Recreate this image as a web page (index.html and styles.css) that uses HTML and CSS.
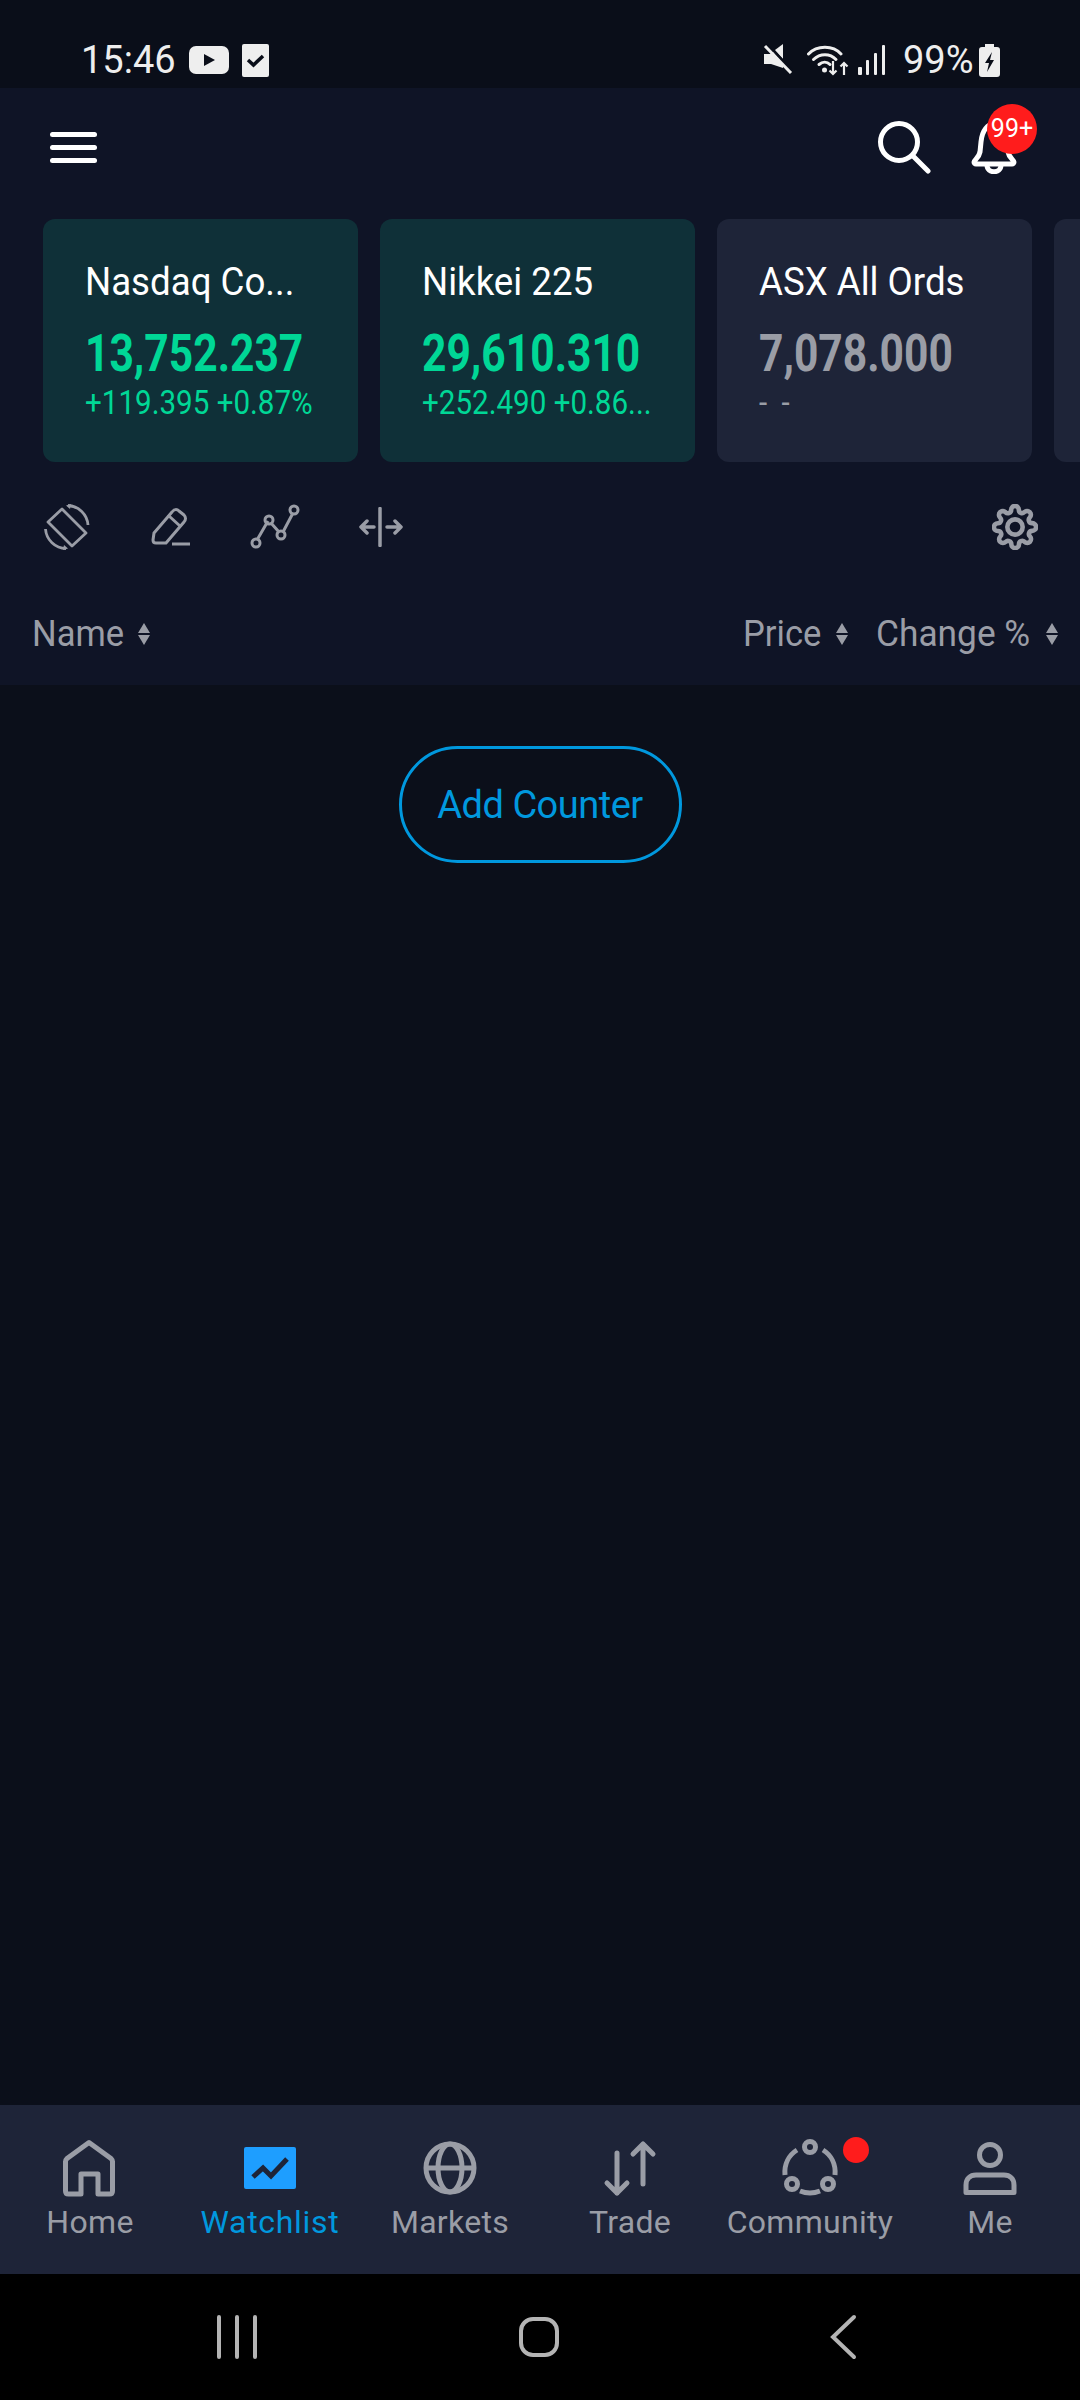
FILE: index.html
```html
<!DOCTYPE html>
<html lang="en">
<head>
  <meta charset="UTF-8">
  <meta name="viewport" content="width=device-width, initial-scale=1.0">
  <title>Watchlist</title>
  <link rel="stylesheet" href="styles.css">
</head>
<body>
  <div class="status-bar">
    <div class="status-left">
      <span class="time">15:46</span>
      <svg class="st-youtube" width="40" height="28" viewBox="0 0 40 28"><rect width="40" height="28" rx="7" fill="#eee"/><path d="M15 8l11 6-11 6z" fill="#0a0e19"/></svg>
      <svg class="st-check" width="27" height="33" viewBox="0 0 27 33"><rect width="27" height="33" rx="2" fill="#eee"/><path d="M6 16l5.500 5L21 12" fill="none" stroke="#0a0e19" stroke-width="3.500"/></svg>
    </div>
    <div class="status-right">
      <svg width="30" height="30" viewBox="0 0 30 30"><path d="M1 10h6l3-2 10 12v4L8 20H1z" fill="#eee"/><path d="M12 6l8-6v15z" fill="#eee"/><path d="M2 2l26 27" stroke="#eee" stroke-width="3"/><path d="M2 2l26 27" stroke="#0a0e19" stroke-width="1" transform="translate(3 -2)"/></svg>
      <svg class="st-wifi" width="43" height="32" viewBox="0 0 43 32"><g fill="none" stroke="#eee" stroke-width="3" stroke-linecap="round"><path d="M1.500 10C10 1 26 1 34 10"/><path d="M6.500 15.500C13 9 23 9 29 15.500"/><path d="M12 20.500c3.500-3 8-3 11 0"/></g><circle cx="17.500" cy="26" r="2.500" fill="#eee"/><g fill="none" stroke="#eee" stroke-width="2.200"><path d="M26 17v13M22.500 26.500l3.500 3.500 3.500-3.500"/><path d="M37 31V19M33.500 22.500l3.500-3.500 3.500 3.500"/></g></svg>
      <svg class="st-signal" width="28" height="30" viewBox="0 0 28 30"><g fill="#eee"><rect x="0" y="22" width="4" height="8" rx="1"/><rect x="8" y="15" width="3" height="15" rx="1"/><rect x="16" y="8" width="3" height="22" rx="1"/><rect x="24" y="0" width="3" height="30" rx="1"/></g></svg>
      <span class="battery-pct">99%</span>
      <svg class="st-battery" width="21" height="33" viewBox="0 0 21 33"><path d="M6 0h9v3h3a3 3 0 0 1 3 3v24a3 3 0 0 1-3 3H3a3 3 0 0 1-3-3V6a3 3 0 0 1 3-3h3z" fill="#eee"/><path d="M13 8l-7 11h4l-2 9 7-12h-4z" fill="#0a0e19"/></svg>
    </div>
  </div>

  <div class="header">
    <div class="top-bar">
      <div class="hamburger"><span></span><span></span><span></span></div>
      <div class="top-actions">
        <svg width="54" height="54" viewBox="0 0 54 54"><circle cx="22" cy="22" r="18.500" fill="none" stroke="#fff" stroke-width="5"/><path d="M36 36l15 15" stroke="#fff" stroke-width="5" stroke-linecap="round"/></svg>
        <div class="bell">
          <svg width="48" height="54" viewBox="0 0 48 54"><path d="M4 42c0-2 5-4 6-10l1-10C12 10 18 4 24 4s12 6 13 18l1 10c1 6 6 8 6 10 0 1-1 2-2 2H6c-1 0-2-1-2-2z" fill="none" stroke="#fff" stroke-width="5" stroke-linejoin="round"/><path d="M17 45c0 9 14 9 14 0" fill="none" stroke="#fff" stroke-width="5"/></svg>
          <span class="badge">99+</span>
        </div>
      </div>
    </div>

    <div class="cards">
      <div class="card up">
        <div class="card-name"><span class="narrow">Nasdaq Co...</span></div>
        <div class="card-price"><span class="narrow">13,752.237</span></div>
        <div class="card-change"><span class="narrow">+119.395 +0.87%</span></div>
      </div>
      <div class="card up">
        <div class="card-name"><span class="narrow">Nikkei 225</span></div>
        <div class="card-price"><span class="narrow">29,610.310</span></div>
        <div class="card-change"><span class="narrow">+252.490 +0.86...</span></div>
      </div>
      <div class="card flat">
        <div class="card-name"><span class="narrow">ASX All Ords</span></div>
        <div class="card-price"><span class="narrow">7,078.000</span></div>
        <div class="card-change dashes"><span class="narrow">- -</span></div>
      </div>
      <div class="card flat"></div>
    </div>

    <div class="toolbar">
      <svg class="tool-rotate" width="46" height="46" viewBox="0 0 46 46"><g fill="none" stroke="#9a9da6" stroke-width="2.800" stroke-linejoin="round"><path d="M18 5l24 24-14 13L4 18z"/><path d="M24 1.500A21 21 0 0 1 44 21"/><path d="M22 44.500A21 21 0 0 1 1.500 25"/></g><path d="M22 1.500l5-1.500-1 5zM24 44.500l-5 1.500 1-5z" fill="#9a9da6"/></svg>
      <svg class="tool-pencil" width="40" height="40" viewBox="0 0 40 40"><g fill="none" stroke="#9a9da6" stroke-width="3" stroke-linejoin="round" stroke-linecap="round"><path d="M3 26L21 5c2-3 5-3 7-1l5 4c2 2 2 5 0 7L15 36H5c-2 0-3-1-3-3z"/><path d="M18 9l11 10"/></g><path d="M21 37h18" stroke="#9a9da6" stroke-width="3"/></svg>
      <svg class="tool-line" width="50" height="46" viewBox="0 0 50 46"><g fill="none" stroke="#9a9da6" stroke-width="3"><path d="M7 36l11-19M21 19l8 9M33 28l10-19"/><circle cx="6" cy="39" r="4"/><circle cx="19" cy="16" r="4"/><circle cx="31" cy="31" r="4"/><circle cx="44" cy="6" r="4"/></g></svg>
      <svg class="tool-width" width="44" height="40" viewBox="0 0 44 40"><g fill="none" stroke="#9a9da6" stroke-width="3.500" stroke-linecap="round" stroke-linejoin="round"><path d="M21 1.500v37"/><path d="M2 20h13M8 14l-6 6 6 6"/><path d="M28 20h14M36 14l6 6-6 6"/></g></svg>
      <svg class="tool-gear" width="46" height="46" viewBox="0 0 24 24"><g fill="none" stroke="#9a9da6" stroke-width="2.400" stroke-linejoin="round"><circle cx="12" cy="12" r="4"/><path d="M19.400 15a1.650 1.650 0 0 0 .33 1.820l.06.06a2 2 0 0 1 0 2.830 2 2 0 0 1-2.830 0l-.06-.06a1.650 1.650 0 0 0-1.820-.33 1.650 1.650 0 0 0-1 1.510V21a2 2 0 0 1-2 2 2 2 0 0 1-2-2v-.09A1.650 1.650 0 0 0 9 19.400a1.650 1.650 0 0 0-1.820.33l-.06.06a2 2 0 0 1-2.830 0 2 2 0 0 1 0-2.830l.06-.06a1.650 1.650 0 0 0 .33-1.820 1.650 1.650 0 0 0-1.510-1H3a2 2 0 0 1-2-2 2 2 0 0 1 2-2h.09A1.650 1.650 0 0 0 4.600 9a1.650 1.650 0 0 0-.33-1.820l-.06-.06a2 2 0 0 1 0-2.830 2 2 0 0 1 2.830 0l.06.06a1.650 1.650 0 0 0 1.820.33H9a1.650 1.650 0 0 0 1-1.510V3a2 2 0 0 1 2-2 2 2 0 0 1 2 2v.09a1.650 1.650 0 0 0 1 1.510 1.650 1.650 0 0 0 1.820-.33l.06-.06a2 2 0 0 1 2.830 0 2 2 0 0 1 0 2.830l-.06.06a1.650 1.650 0 0 0-.33 1.820V9a1.650 1.650 0 0 0 1.510 1H21a2 2 0 0 1 2 2 2 2 0 0 1-2 2h-.09a1.650 1.650 0 0 0-1.510 1z"/></g></svg>
    </div>

    <div class="col-header">
      <div class="col-name"><span>Name</span><i class="sort"></i></div>
      <div class="col-price"><span>Price</span><i class="sort"></i></div>
      <div class="col-change"><span>Change %</span><i class="sort"></i></div>
    </div>
  </div>

  <div class="content">
    <button class="add-btn">Add Counter</button>
  </div>

  <div class="tabbar">
    <div class="tab">
      <svg class="tab-icon" width="60" height="62" viewBox="0 0 60 62"><path d="M5.500 25.500c0-1 .5-2 1.500-3L29 6.500l22 16c1 1 1.500 2 1.500 3V55c0 2-1 3-3 3H38V38H21v20H8.500c-2 0-3-1-3-3z" fill="none" stroke="#9a9da6" stroke-width="5" stroke-linejoin="round"/></svg>
      <span>Home</span>
    </div>
    <div class="tab active">
      <svg class="tab-icon" width="60" height="62" viewBox="0 0 60 62"><rect x="4" y="11" width="52" height="42" rx="2" fill="#1e9eff"/><path d="M13 41l10-9 8 8 16-17" fill="none" stroke="#1e2438" stroke-width="5"/></svg>
      <span>Watchlist</span>
    </div>
    <div class="tab">
      <svg class="tab-icon" width="60" height="62" viewBox="0 0 60 62"><g fill="none" stroke="#9a9da6" stroke-width="5"><circle cx="30" cy="32" r="24"/><ellipse cx="30" cy="32" rx="12" ry="24"/><path d="M6 32h48"/></g></svg>
      <span>Markets</span>
    </div>
    <div class="tab">
      <svg class="tab-icon" width="60" height="62" viewBox="0 0 60 62"><g fill="none" stroke="#9a9da6" stroke-width="5" stroke-linecap="round" stroke-linejoin="round"><path d="M17 17v40M7 47l10 10 10-10"/><path d="M43 8v40M33 18l10-10 10 10"/></g></svg>
      <span>Trade</span>
    </div>
    <div class="tab">
      <div class="tab-dot-wrap">
        <svg class="tab-icon" width="60" height="62" viewBox="0 0 60 62"><g fill="none" stroke="#9a9da6" stroke-width="5"><circle cx="30" cy="11" r="5.500"/><circle cx="12" cy="48" r="5.500"/><circle cx="48" cy="48" r="5.500"/><path d="M17 14C9 19 4 28 5 39"/><path d="M43 14c8 5 13 14 12 25"/><path d="M20 55q10 4 20 0"/></g></svg>
        <i class="dot"></i>
      </div>
      <span>Community</span>
    </div>
    <div class="tab">
      <svg class="tab-icon" width="60" height="62" viewBox="0 0 60 62"><g fill="none" stroke="#9a9da6" stroke-width="5" stroke-linejoin="round"><circle cx="30" cy="19" r="10.500"/><path d="M6 56.500V49c0-6 4-10 10-10h28c6 0 10 4 10 10v7.500z"/></g></svg>
      <span>Me</span>
    </div>
  </div>

  <div class="nav-bar">
    <svg width="42" height="44" viewBox="0 0 42 44"><path d="M3 2v40M21 2v40M39 2v40" stroke="#b4b4b4" stroke-width="4" stroke-linecap="round"/></svg>
    <svg class="nav-home" width="42" height="44" viewBox="0 0 42 44"><rect x="3" y="4" width="36" height="36" rx="12" fill="none" stroke="#b4b4b4" stroke-width="4"/></svg>
    <svg class="nav-back" width="28" height="46" viewBox="0 0 28 46"><path d="M25 3L4 23l21 20" fill="none" stroke="#b4b4b4" stroke-width="4" stroke-linecap="round"/></svg>
  </div>
</body>
</html>
```

FILE: styles.css
```css
* {
  box-sizing: border-box;
}
body {
  margin: 0;
  width: 1080px;
  height: 2400px;
  display: flex;
  flex-direction: column;
  overflow: hidden;
  font-family: Roboto, "Noto Sans", sans-serif;
  background-color: #0b0f1a;
  color: #9a9da6;
}
svg {
  display: block;
  flex: none;
}

/* squeezes Roboto to the width of the app's narrower font */
.narrow {
  display: inline-block;
  white-space: nowrap;
  transform: scaleX(0.87);
  transform-origin: left center;
}

/* status bar */
.status-bar {
  height: 88px;
  flex: none;
  display: flex;
  justify-content: space-between;
  align-items: center;
  padding: 32px 80px 0 81px;
  background: #0a0e19;
  color: #eee;
}
.status-left, .status-right {
  display: flex;
  align-items: center;
}
.time {
  font-size: 38px;
  line-height: 44px;
  width: 108px;
}
.st-check {
  margin-left: 13px;
}
.st-wifi {
  margin-left: 14px;
}
.st-signal {
  margin-left: 8px;
}
.battery-pct {
  font-size: 38px;
  line-height: 44px;
  margin-left: 17px;
  width: 76px;
}
.status-right svg:first-child {
  margin-top: -2px;
}

/* header */
.header {
  height: 597px;
  flex: none;
  background: #0f1426;
}
.top-bar {
  height: 112px;
  display: flex;
  justify-content: space-between;
  align-items: center;
  padding: 0 62px 0 50px;
}
.hamburger {
  width: 47px;
  display: flex;
  flex-direction: column;
  gap: 8px;
  margin-top: 6px;
}
.hamburger span {
  height: 5px;
  border-radius: 3px;
  background: #fff;
}
.top-actions {
  display: flex;
  align-items: center;
  gap: 39px;
  margin-top: 6px;
}
.bell {
  position: relative;
}
.badge {
  position: absolute;
  left: 17px;
  top: -16px;
  width: 50px;
  height: 50px;
  border-radius: 50%;
  background: #ff1c1c;
  color: #fff;
  font-size: 25px;
  line-height: 50px;
  text-align: center;
}

/* index cards */
.cards {
  display: flex;
  gap: 22px;
  margin-top: 19px;
  padding-left: 43px;
  overflow: hidden;
}
.card {
  flex: 0 0 315px;
  height: 243px;
  padding: 41px 0 0 42px;
  border-radius: 12px;
  overflow: hidden;
}
.card.up {
  background: #0f3038;
  --accent: #00d796;
}
.card.flat {
  background: #1e2438;
  --accent: #9a9da6;
}
.card-name {
  font-size: 39px;
  line-height: 44px;
  color: #fff;
}
.card-name .narrow {
  transform: scaleX(0.94);
}
.card-price {
  margin-top: 22px;
  font-size: 51px;
  line-height: 56px;
  font-weight: 700;
  color: var(--accent);
}
.card-price .narrow {
  transform: scaleX(0.835);
}
.card-change {
  margin-top: 2px;
  font-size: 34px;
  line-height: 36px;
  color: var(--accent);
}
.dashes {
  word-spacing: 8px;
}

/* toolbar */
.toolbar {
  display: flex;
  align-items: center;
  height: 46px;
  margin-top: 42px;
  padding-left: 44px;
}
.tool-pencil {
  margin-left: 61px;
}
.tool-line {
  margin-left: 59px;
}
.tool-width {
  margin-left: 59px;
}
.tool-gear {
  margin-left: auto;
  margin-right: 42px;
}

/* column headings */
.col-header {
  display: flex;
  align-items: center;
  height: 44px;
  margin-top: 62px;
  padding: 0 22px 0 32px;
  font-size: 36px;
  line-height: 44px;
}
.col-header div {
  display: flex;
  align-items: center;
}
.col-name {
  margin-right: auto;
}
.col-change {
  margin-left: 28px;
}
.col-header span {
  display: block;
  white-space: nowrap;
  transform: scaleX(0.96);
  transform-origin: left center;
}
.col-name span {
  width: 90px;
}
.col-price span {
  width: 77px;
}
.col-change span {
  width: 154px;
  transform: scaleX(0.98);
}
.sort {
  display: block;
  position: relative;
  width: 12px;
  height: 22px;
  margin-left: 16px;
}
.sort::before, .sort::after {
  content: "";
  position: absolute;
  left: 0;
  border-left: 6px solid transparent;
  border-right: 6px solid transparent;
}
.sort::before {
  top: 0;
  border-bottom: 10px solid #9a9da6;
}
.sort::after {
  bottom: 0;
  border-top: 10px solid #9a9da6;
}

/* empty watchlist */
.content {
  flex: 1;
  display: flex;
  justify-content: center;
  align-items: flex-start;
  padding-top: 61px;
}
.add-btn {
  width: 283px;
  height: 117px;
  padding: 0;
  border: 3px solid #0098de;
  border-radius: 59px;
  background: transparent;
  color: #0098de;
  font-family: inherit;
  font-size: 38px;
  letter-spacing: -0.5px;
}

/* bottom tabs */
.tabbar {
  height: 169px;
  flex: none;
  display: flex;
  background: #1e2438;
}
.tab {
  flex: 1;
  display: flex;
  flex-direction: column;
  align-items: center;
  padding-top: 31px;
  font-size: 32px;
  line-height: 40px;
  letter-spacing: 0.3px;
}
.tab span {
  margin-top: 4px;
  white-space: nowrap;
}
.tab.active {
  color: #0098de;
  letter-spacing: 0.7px;
}
.tab-dot-wrap {
  position: relative;
}
.dot {
  position: absolute;
  left: 63px;
  top: 1px;
  width: 26px;
  height: 26px;
  border-radius: 50%;
  background: #ff1c1c;
}

/* system buttons */
.nav-bar {
  height: 126px;
  flex: none;
  display: flex;
  align-items: center;
  padding-left: 216px;
  background: #000;
}
.nav-home {
  margin-left: 260px;
}
.nav-back {
  margin-left: 269px;
}
```
